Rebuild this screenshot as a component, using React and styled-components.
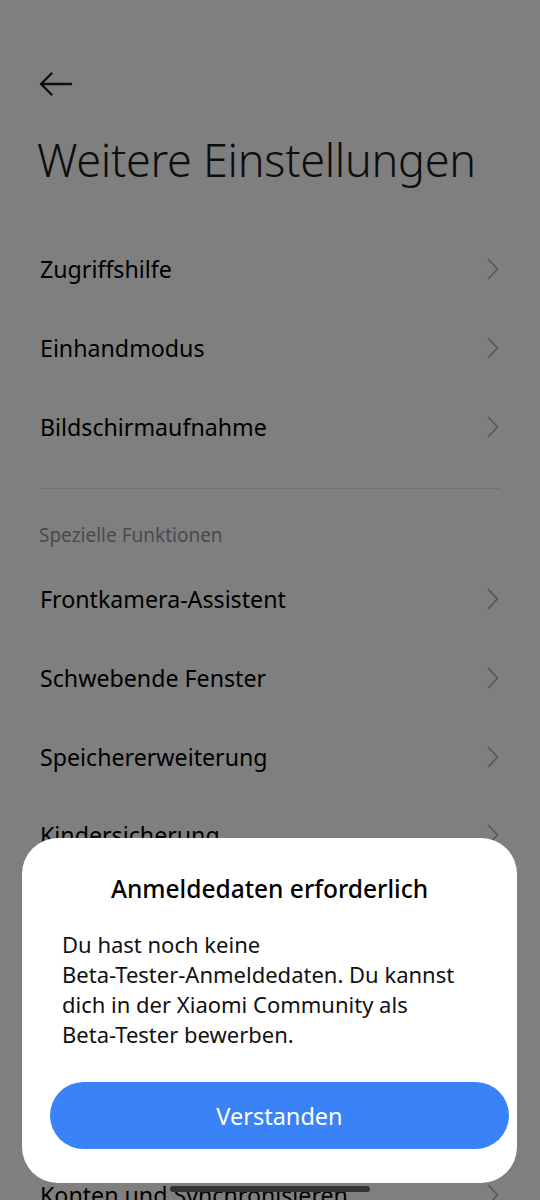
import React from 'react'
import styled, { createGlobalStyle } from 'styled-components'

const Global = createGlobalStyle`
  html, body {
    margin: 0;
    padding: 0;
    background: #ffffff;
  }
  body {
    font-family: 'Noto Sans', Roboto, sans-serif;
  }
`

const firstGroup = ['Zugriffshilfe', 'Einhandmodus', 'Bildschirmaufnahme']
const secondGroup = [
  'Frontkamera-Assistent',
  'Schwebende Fenster',
  'Speichererweiterung',
  'Kindersicherung',
  'Tastenkombinationen',
  'Schnellzugriff',
  'Hintergrund-Apps',
]

const Chevron = () => (
  <svg width="12" height="22" viewBox="0 0 12 22" fill="none">
    <path d="M1.5 1.5 L10.5 11 L1.5 20.5" stroke="#b0b0b0" strokeWidth="1.8" strokeLinecap="round" strokeLinejoin="round" />
  </svg>
)

const BackArrow = () => (
  <svg width="34" height="24" viewBox="0 0 34 24" fill="none">
    <path d="M2 12 H32 M12.5 1.5 L2 12 L12.5 22.5" stroke="#1a1a1a" strokeWidth="2.4" strokeLinecap="round" strokeLinejoin="round" />
  </svg>
)

const Item = ({ label }) => (
  <Row>
    <RowLabel>{label}</RowLabel>
    <Chevron />
  </Row>
)

export default function App() {
  return (
    <>
      <Global />
      <Screen>
        <Header>
          <BackButton><BackArrow /></BackButton>
          <Title>Weitere Einstellungen</Title>
        </Header>
        <List>
          {firstGroup.map(l => <Item key={l} label={l} />)}
          <Divider />
          <SectionTitle>Spezielle Funktionen</SectionTitle>
          {secondGroup.map(l => <Item key={l} label={l} />)}
          <Divider />
          <Item label="Konten und Synchronisieren" />
        </List>

        <Dim />
        <Dialog>
          <DialogTitle>Anmeldedaten erforderlich</DialogTitle>
          <DialogText>
            Du hast noch keine<br />
            Beta-Tester-Anmeldedaten. Du kannst<br />
            dich in der Xiaomi Community als<br />
            Beta-Tester bewerben.
          </DialogText>
          <PrimaryButton>Verstanden</PrimaryButton>
        </Dialog>
        <HomeBar />
      </Screen>
    </>
  )
}

const Screen = styled.div`
  position: relative;
  width: 540px;
  height: 1200px;
  overflow: hidden;
  background: #ffffff;
`

const Header = styled.div`
  padding: 68px 0 0 0;
`

const BackButton = styled.div`
  display: flex;
  align-items: center;
  height: 32px;
  padding-left: 39px;
`

const Title = styled.h1`
  margin: 30px 0 0 37px;
  font-family: 'Noto Sans', sans-serif;
  font-weight: 300;
  font-size: 45px;
  line-height: 60px;
  color: #1a1a1a;
  letter-spacing: -0.3px;
`

const List = styled.div`
  margin-top: 40px;
  display: flex;
  flex-direction: column;
`

const Row = styled.div`
  height: 78.7px;
  display: flex;
  align-items: center;
  justify-content: space-between;
  padding: 0 41px 0 40px;
`

const RowLabel = styled.span`
  font-size: 23.2px;
  color: #000000;
`

const Divider = styled.div`
  height: 1px;
  margin: 22px 40px;
  background: #e4e4e4;
`

const SectionTitle = styled.div`
  padding: 12px 39px 13px;
  font-size: 19px;
  line-height: 24px;
  color: #8f95a3;
`

const Dim = styled.div`
  position: absolute;
  inset: 0;
  background: rgba(0, 0, 0, 0.5);
`

const Dialog = styled.div`
  position: absolute;
  left: 22px;
  top: 838px;
  width: 495px;
  height: 345px;
  box-sizing: border-box;
  padding: 36px 8px 0 28px;
  background: #ffffff;
  border-radius: 36px;
  display: flex;
  flex-direction: column;
`

const DialogTitle = styled.div`
  margin-left: -20px;
  text-align: center;
  font-size: 24.5px;
  line-height: 30px;
  font-weight: 500;
  color: #000000;
`

const DialogText = styled.p`
  margin: 25px 0 0 12px;
  font-size: 22px;
  line-height: 30px;
  color: #111111;
`

const PrimaryButton = styled.button`
  margin-top: 33px;
  height: 67px;
  border: none;
  border-radius: 34px;
  background: #3a82f7;
  color: #ffffff;
  font-family: 'Noto Sans', sans-serif;
  font-size: 23.5px;
`

const HomeBar = styled.div`
  position: absolute;
  left: 170px;
  top: 1186px;
  width: 200px;
  height: 6px;
  border-radius: 3px;
  background: #333333;
`
